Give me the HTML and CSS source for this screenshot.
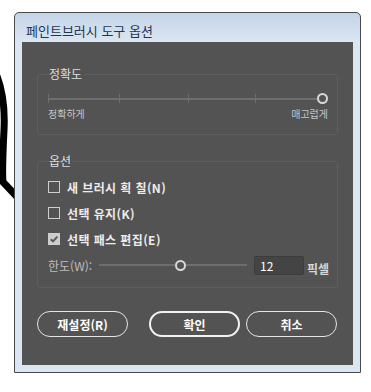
FILE: index.html
```html
<!DOCTYPE html>
<html lang="ko">
<head>
<meta charset="utf-8">
<title>페인트브러시 도구 옵션</title>
<link rel="stylesheet" href="styles.css">
</head>
<body>
<div class="stage">
  <svg class="brush-stroke" width="30" height="220" viewBox="0 0 30 220">
    <path d="M -3 76 C 3 92, 5 110, 4 130 S 2 172, 3 182 L 20 200" fill="none" stroke="#000" stroke-width="7" stroke-linecap="butt"/>
  </svg>
  <div class="window">
    <div class="titlebar">페인트브러시 도구 옵션</div>
    <div class="content">
      <fieldset class="group g1">
        <legend>정확도</legend>
        <div class="fidelity">
          <span class="seg w71"></span>
          <span class="seg w69"></span>
          <span class="seg w67"></span>
          <span class="seg last"></span>
          <span class="knob"></span>
        </div>
        <div class="fid-labels"><span>정확하게</span><span>매고럽게</span></div>
      </fieldset>
      <fieldset class="group g2">
        <legend>옵션</legend>
        <div class="check"><span class="box"></span><span>새 브러시 획 칠(N)</span></div>
        <div class="check"><span class="box"></span><span>선택 유지(K)</span></div>
        <div class="check"><span class="box checked"><svg width="10" height="10" viewBox="0 0 10 10"><path d="M1.8 5.2 L4 7.4 L8.4 2.6" fill="none" stroke="#5a5a5a" stroke-width="2"/></svg></span><span>선택 패스 편집(E)</span></div>
        <div class="limit">
          <span class="lbl">한도(W):</span>
          <span class="track t1"></span>
          <span class="knob"></span>
          <span class="track t2"></span>
          <span class="num">12</span>
          <span class="unit">픽셀</span>
        </div>
      </fieldset>
      <div class="buttons">
        <button class="btn">재설정(R)</button>
        <button class="btn primary">확인</button>
        <button class="btn">취소</button>
      </div>
    </div>
  </div>
</div>
</body>
</html>
```
FILE: styles.css
```css
html, body {
  margin: 0;
  padding: 0;
  background: #ffffff;
}
body {
  width: 371px;
  height: 392px;
  overflow: hidden;
  font-family: "Noto Sans CJK KR", "Noto Sans", sans-serif;
}
.stage {
  position: relative;
  padding-top: 12px;
}
.brush-stroke {
  position: absolute;
  left: 0;
  top: 0;
  z-index: 0;
}
.window {
  position: relative;
  z-index: 1;
  box-sizing: border-box;
  margin-left: 14px;
  width: 347px;
  height: 361px;
  border: 1px solid #4a4a4a;
  border-radius: 5px 5px 0 0;
  background: linear-gradient(#c4d4e8, #dbe6f2 29px, #dbe6f2);
  padding: 0 7px 7px 7px;
  display: flex;
  flex-direction: column;
}
.titlebar {
  box-sizing: border-box;
  height: 29px;
  padding: 9px 0 0 4px;
  font-size: 13px;
  line-height: 18px;
  color: #1f3553;
}
.content {
  flex: 1;
  background: #535353;
  padding: 24px 15px 0 15px;
  display: flex;
  flex-direction: column;
}
.group {
  margin: 0;
  border: 1px solid #5e5e5e;
  border-radius: 3px;
  padding: 0 10px 0 10px;
  min-width: 0;
}
.group legend {
  padding: 0 2px 0 0;
  margin-left: 1px;
  font-size: 12px;
  line-height: 16px;
  color: #dedede;
}
.g1 {
  padding-top: 11px;
  padding-bottom: 13px;
}
.fidelity {
  display: flex;
  align-items: center;
  height: 10px;
}
.seg {
  flex: none;
  height: 9px;
  border-left: 1px solid #6e6e6e;
  background: linear-gradient(transparent 3.5px, #6e6e6e 3.5px, #6e6e6e 5.5px, transparent 5.5px);
}
.seg.w71 { width: 70px; }
.seg.w69 { width: 68px; }
.seg.w67 { width: 66px; }
.seg.last { width: 61px; }
.knob {
  box-sizing: border-box;
  width: 11px;
  height: 11px;
  border: 2px solid #d8d8d8;
  border-radius: 50%;
  flex: none;
}
.fid-labels {
  display: flex;
  justify-content: space-between;
  width: 280px;
  margin-top: 4px;
  font-size: 10px;
  line-height: 14px;
  color: #c4c4c4;
}
.g2 {
  margin-top: 18px;
  padding-top: 5px;
  padding-bottom: 9px;
}
.check {
  display: flex;
  align-items: center;
  gap: 7px;
  height: 26px;
  font-size: 12px;
  letter-spacing: 0.4px;
  font-weight: 700;
  color: #ececec;
}
.box {
  flex: none;
  box-sizing: border-box;
  width: 12px;
  height: 12px;
  border: 1px solid #cfcfcf;
  display: flex;
  align-items: center;
  justify-content: center;
}
.box.checked {
  background: #cdcdcd;
}
.limit {
  display: flex;
  align-items: center;
  height: 26px;
  white-space: nowrap;
}
.limit > span {
  flex: none;
}
.lbl {
  font-size: 12px;
  color: #bdbdbd;
  width: 51px;
}
.track {
  height: 2px;
  background: #6e6e6e;
}
.t1 { width: 76px; }
.t2 { width: 61px; }
.num {
  box-sizing: border-box;
  width: 50px;
  height: 19px;
  margin-left: 7px;
  padding-left: 5px;
  background: #444444;
  border: 1px solid #3c3c3c;
  border-radius: 2px;
  font-size: 12px;
  line-height: 17px;
  color: #ffffff;
}
.unit {
  margin-left: 3px;
  margin-top: 6px;
  font-size: 12px;
  font-weight: 700;
  color: #d6d6d6;
}
.buttons {
  display: flex;
  margin-top: 23px;
}
.btn {
  box-sizing: border-box;
  width: 91px;
  height: 26px;
  border: 1.5px solid #e6e6e6;
  border-radius: 13px;
  background: transparent;
  color: #ffffff;
  font-family: "Noto Sans CJK KR", "Noto Sans", sans-serif;
  font-size: 12px;
  font-weight: 700;
  padding: 0;
}
.btn.primary {
  margin-left: 21px;
  margin-right: 6px;
  border: 2px solid #f2f2f2;
}
```
